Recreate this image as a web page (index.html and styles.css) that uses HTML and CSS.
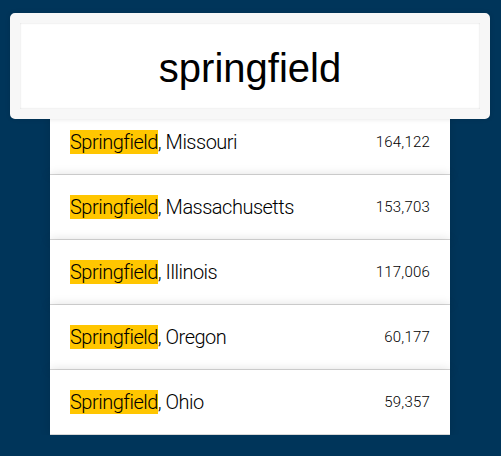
FILE: index.html
```html
<!DOCTYPE html>
<html>
<head>
<meta charset="utf-8">
<link rel="stylesheet" href="styles.css">
</head>
<body>
<form class="search-form">
  <input type="text" class="search" value="springfield">
  <ul class="suggestions">
    <li><span class="name"><span class="hl">Springfield</span>, Missouri</span><span class="population">164,122</span></li>
    <li><span class="name"><span class="hl">Springfield</span>, Massachusetts</span><span class="population">153,703</span></li>
    <li><span class="name"><span class="hl">Springfield</span>, Illinois</span><span class="population">117,006</span></li>
    <li><span class="name"><span class="hl">Springfield</span>, Oregon</span><span class="population">60,177</span></li>
    <li><span class="name"><span class="hl">Springfield</span>, Ohio</span><span class="population">59,357</span></li>
  </ul>
</form>
</body>
</html>
```
FILE: styles.css
```css
html {
  box-sizing: border-box;
  background: #00355a;
}
*, *::before, *::after {
  box-sizing: inherit;
}
body {
  margin: 0;
  font-family: Roboto, "Liberation Sans", sans-serif;
  font-weight: 300;
  font-size: 20px;
  color: #000;
}
.search-form {
  width: 400px;
  margin: 0 0 0 50px;
  padding-top: 4px;
}
input.search {
  display: block;
  position: relative;
  top: 9px;
  z-index: 2;
  width: 480px;
  margin: 0 0 0 -40px;
  padding: 22px 20px 18px;
  height: 106px;
  line-height: 46px;
  font-family: "Liberation Sans", Arial, sans-serif;
  font-weight: 400;
  font-size: 40px;
  color: #000;
  text-align: center;
  background: #fff;
  outline: 0;
  border: 10px solid #f7f7f7;
  border-radius: 5px;
  box-shadow: 0 0 5px rgba(0, 0, 0, 0.12), inset 0 0 2px rgba(0, 0, 0, 0.19);
}
.suggestions {
  margin: 0;
  padding: 0;
  list-style: none;
}
.suggestions li {
  display: flex;
  justify-content: space-between;
  margin: 0;
  padding: 20px;
  line-height: 24px;
  background: #fff;
  border-bottom: 1px solid #d8d8d8;
  box-shadow: 0 0 10px rgba(0, 0, 0, 0.14);
}
.name {
  letter-spacing: -0.5px;
}
.population {
  font-size: 15px;
  letter-spacing: 0.2px;
}
.hl {
  background: #ffc600;
}
```
